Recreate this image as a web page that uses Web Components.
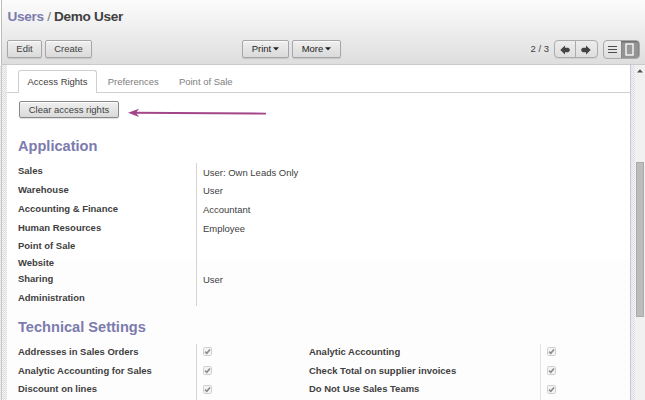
<!DOCTYPE html>
<html lang="en">
<head>
<meta charset="utf-8">
<title>Users / Demo User</title>
<style>
html,body{margin:0;height:400px;overflow:hidden;background:#fff}
body{font:9.48px/12px "Liberation Sans",Arial,sans-serif;color:#404040}
</style>
</head>
<body>
<user-page></user-page>
<script>
function define(name, html, init) {
  const t = document.createElement('template');
  t.innerHTML = html;
  customElements.define(name, class extends HTMLElement {
    constructor() {
      super();
      this.attachShadow({mode: 'open'}).append(t.content.cloneNode(true));
    }
    connectedCallback() { if (init) init(this, this.shadowRoot); }
  });
}

define('push-button', `<style>
:host{display:flex;box-sizing:border-box;height:18px;align-items:center;justify-content:center;gap:2px;border:1px solid #a6a6a6;border-radius:2px;background:linear-gradient(#efefef,#dadada);box-shadow:0 1px 1px rgba(0,0,0,.13),inset 0 1px 1px rgba(255,255,255,.8);color:#404040;white-space:nowrap}
:host([menu]){color:#222}
svg{display:none}
:host([menu]) svg{display:block}
</style><slot></slot><svg width="6" height="4" viewBox="0 0 6 4"><path d="M0 .3h6L3 3.6z" fill="#222"/></svg>`);

define('record-pager', `<style>
:host{display:flex;box-sizing:border-box;width:44px;height:18px;border:1px solid #acacac;border-radius:4px;background:linear-gradient(#ededed,#dedede);box-shadow:0 1px 0 #d0d0d0}
span{flex:1;display:flex;align-items:center;justify-content:center;padding-top:2px}
span+span{border-left:1px solid #acacac}
</style><span><svg width="10" height="10" viewBox="0 0 10 10"><path d="M.3 5L5 .5V2.8h3.2L9.7 4v2L8.2 7.2H5v2.3z" fill="#444"/></svg></span><span><svg width="10" height="10" viewBox="0 0 10 10"><path d="M9.7 5L5 .5V2.8H1.8L.3 4v2l1.5 1.2H5v2.3z" fill="#444"/></svg></span>`);

define('view-switch', `<style>
:host{display:flex;box-sizing:border-box;width:37px;height:19px;border:1px solid #a8a8a8;border-radius:4px;background:linear-gradient(#ededed,#dedede);overflow:hidden}
span{width:17px;display:flex;align-items:center;justify-content:center}
span+span{flex:1;background:#949494;box-shadow:inset 0 1px 2px #666}
</style><span><svg width="9" height="9" viewBox="0 0 9 9" shape-rendering="crispEdges"><path d="M0 1.5h9M0 4.5h9M0 7.5h9" stroke="#4c4c4c" stroke-width="1"/></svg></span><span><svg width="9" height="13" viewBox="0 0 9 13"><rect x="1" y="1" width="7" height="11" fill="#999" stroke="#fff" stroke-width="1.3"/></svg></span>`);

define('top-bar', `<style>
:host{display:flex;flex-direction:column;box-sizing:border-box;height:65px;margin-left:1px;border-left:1px solid #bdbdbd;border-bottom:1px solid #cacaca;background:linear-gradient(#fcfcfc,#dedede);padding:9px 4px 0 5px;flex:none}
h1{margin:0 0 0 .5px;font-size:13.6px;letter-spacing:-.32px;line-height:15px;color:#404040;white-space:pre}
h1 a{color:#7c7bad}h1 i{font-style:normal;font-weight:400;color:#777}
.row{display:flex;margin-top:16px;align-items:flex-start}
.pos{width:19px;line-height:18px;margin-left:189.5px;margin-right:4px;white-space:nowrap}
</style><h1><a>Users</a><i> / </i>Demo User</h1>
<div class="row"><push-button style="width:35px">Edit</push-button><push-button style="width:47px;margin-left:3px">Create</push-button>
<push-button menu style="width:47px;margin-left:150px">Print</push-button><push-button menu style="width:49px;margin-left:3px">More</push-button>
<span class="pos">2 / 3</span><record-pager></record-pager><view-switch style="margin-left:5px"></view-switch></div>`);

define('tab-item', `<style>
:host{display:block;box-sizing:border-box;height:23px;padding:0 8.5px;line-height:21px;border:1px solid transparent;border-bottom:0;color:#7d7d7d;white-space:nowrap;margin-right:1.2px}
:host([active]){background:#fff;border-color:#cfcfcf;border-radius:3px 3px 0 0;color:#404040}
</style><slot></slot>`);

define('tab-bar', `<style>
:host{display:flex;box-sizing:border-box;height:27px;padding:4px 0 0 11px;background:linear-gradient(#d0d0d0,#d0d0d0) bottom/100% 1px no-repeat}
</style><slot></slot>`);

define('group-title', `<style>
:host{display:block;font-weight:700;font-size:14.6px;line-height:18px;color:#7c7bad}
</style><slot></slot>`);

define('check-box', `<style>
:host{display:block;width:9px;height:9px}svg{display:block}
</style><svg width="9" height="9" viewBox="0 0 9 9"><rect x=".5" y=".5" width="8" height="8" rx="1.2" fill="#f4f4f4" stroke="#cfcfcf"/><path d="M2.1 4.7l1.7 1.6L7 2.4" fill="none" stroke="#8c8c8c" stroke-width="1.6"/></svg>`);

define('field-row', `<style>
:host{display:flex;height:18.8px}
:host([short]){height:16.2px}
b{width:178px;flex:none;padding-top:.3px;line-height:16px;white-space:nowrap}
div{flex:1;box-sizing:border-box;padding:1.5px 0 0 6px;line-height:16px;border-left:1px solid #d4d4d4}
:host([wide]) b{width:231px}
:host([wide]) div{border-color:#e4e4e4}
check-box{margin-top:2px}
</style><b></b><div><slot></slot></div>`, (el, root) => {
  root.querySelector('b').textContent = el.getAttribute('label');
  if (el.hasAttribute('checked')) root.querySelector('div').append(document.createElement('check-box'));
});

define('scroll-track', `<style>
:host{display:flex;flex-direction:column;align-items:center;width:10px;background:#f1f1f1}
svg{margin-top:4px}div{width:8px;box-sizing:border-box;height:155px;margin-top:89px;background:#bcbcbc;border:1px solid #aaa}
</style><svg width="6" height="4" viewBox="0 0 6 4"><path d="M0 3.5L3 .3l3 3.2z" fill="#505050"/></svg><div></div>`);

define('user-page', `<style>
:host{display:flex;flex-direction:column;height:400px;width:645px;overflow:hidden}
.main{flex:1;display:flex;min-height:0;background:repeating-conic-gradient(#dedee0 0 25%,#f3f3f5 0 50%) 0 0/2px 2px}
.edge{width:5px;flex:none;border-left:1px solid #c8c8c8;margin-left:1px}
.sheet{width:624px;box-sizing:border-box;border-right:1px solid #c8c8d0;background:linear-gradient(#fff 195px,#fdfdfd 195px);display:flex;flex-direction:column}
.gap{width:4px}
.body{padding:8px 0 0 11px}
group-title{margin-top:19px}
.fields{margin-top:8px}
.cols{display:flex;margin-top:8px}
.cols>div{width:291px}
</style><top-bar></top-bar>
<div class="main"><div class="edge"></div><div class="sheet">
<tab-bar style="margin-top:1px"><tab-item active>Access Rights</tab-item><tab-item>Preferences</tab-item><tab-item>Point of Sale</tab-item></tab-bar>
<div class="body">
<div style="display:flex;align-items:center;height:17px"><push-button style="height:17px;width:100px;margin-left:1px;border-color:#888">Clear access rights</push-button><svg style="margin:6px 0 0 9px" width="140" height="10" viewBox="0 0 140 10"><path d="M6 4.8L138 5.6" stroke="#a24689" stroke-width="1.9"/><path d="M0 4.8L11 .7 8 4.8l3 4.1z" fill="#a24689"/></svg></div>
<group-title>Application</group-title>
<div class="fields">
<field-row label="Sales">User: Own Leads Only</field-row><field-row label="Warehouse">User</field-row><field-row label="Accounting &amp; Finance">Accountant</field-row><field-row label="Human Resources">Employee</field-row><field-row label="Point of Sale" short></field-row><field-row label="Website" short></field-row><field-row label="Sharing">User</field-row><field-row label="Administration" short></field-row>
</div>
<group-title style="margin-top:12px">Technical Settings</group-title>
<div class="cols"><div><field-row label="Addresses in Sales Orders" checked></field-row><field-row label="Analytic Accounting for Sales" checked></field-row><field-row label="Discount on lines" checked></field-row></div>
<div><field-row wide label="Analytic Accounting" checked></field-row><field-row wide label="Check Total on supplier invoices" checked></field-row><field-row wide label="Do Not Use Sales Teams" checked></field-row></div></div>
</div></div><div class="gap"></div><scroll-track></scroll-track></div>`);
</script>
</body>
</html>
